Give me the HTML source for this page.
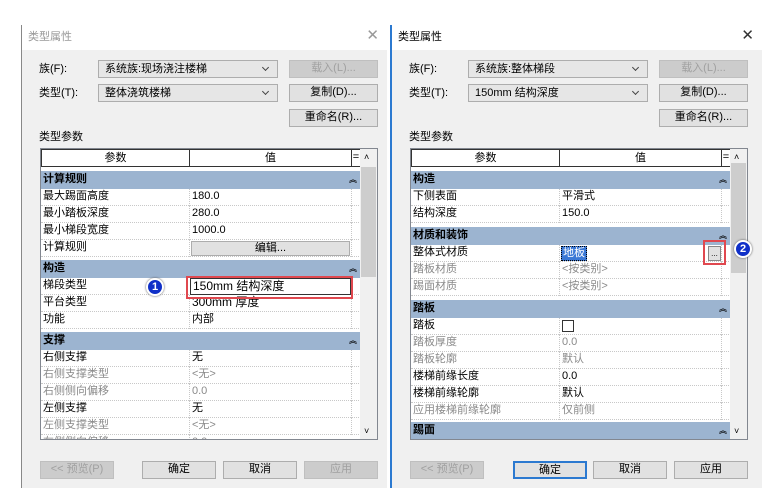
<!DOCTYPE html>
<html><head><meta charset="utf-8"><style>
*{margin:0;padding:0;box-sizing:border-box}
body{width:762px;height:501px;background:#fff;position:relative;overflow:hidden;font-family:"Liberation Sans","Noto Sans CJK SC",sans-serif;font-size:11px;color:#000;line-height:13px}
.a{position:absolute}
.dlg{position:absolute;top:25px;height:463px;background:#f0f0f0}
.tb{position:absolute;left:0;right:0;top:0;height:25px;background:#fff;font-size:11px;padding:6px 0 0 6px}
.x{position:absolute;right:8px;top:3px;font-size:15px;color:#333;line-height:16px}
.lbl{position:absolute;font-size:11px}
.combo{position:absolute;height:18px;width:180px;background:#e6e6e6;border:1px solid #adadad;padding:2px 6px;font-size:11px}
.combo:after{content:"";position:absolute;right:9px;top:4px;width:4px;height:4px;border-right:1px solid #444;border-bottom:1px solid #444;transform:rotate(45deg)}
.btn{position:absolute;height:18px;width:89px;background:#e1e1e1;border:1px solid #adadad;text-align:center;padding-top:1px;font-size:11px}
.dis{color:#a0a0a0;background:#cccccc;border-color:#bfbfbf}
.tbl{position:absolute;top:148px;width:338px;height:292px;background:#fff;border:1px solid #828790;overflow:hidden}
.hd{position:absolute;top:0;height:18px;border:1px solid #333;background:#fff;text-align:center;padding-top:2px}
.row{position:absolute;left:0;width:320px;height:17px;border-bottom:1px dotted #c8c8c8}
.sec{position:absolute;left:0;width:320px;height:18px;background:#9cb4d0;font-weight:bold;padding:2px 0 0 2px}
.sec:after{content:"︽";position:absolute;right:4px;top:2px;font-size:8px;font-weight:bold}
.n{position:absolute;left:2px;top:1px}
.v{position:absolute;top:1px}
.g{color:#8a8a8a}
.vl{position:absolute;top:0;width:1px;height:17px;border-left:1px dotted #c8c8c8}
.sb{position:absolute;top:0;right:0;width:17px;height:290px;background:#f0f0f0}
.th{position:absolute;left:1px;width:15px;background:#cdcdcd}
.badge{position:absolute;width:18px;height:18px;border-radius:50%;background:#1030c8;border:2px solid #fff;box-shadow:0 0 2px #555;color:#fff;font-weight:bold;font-size:11px;text-align:center;line-height:14px}
</style></head><body>

<div class="dlg" style="left:21px;width:366px;border-left:1px solid #888">
 <div class="tb" style="color:#999">类型属性<span class="x" style="color:#999">✕</span></div>
</div>
<div class="lbl" style="left:39px;top:63px">族(F):</div>
<div class="combo" style="left:98px;top:60px">系统族:现场浇注楼梯</div>
<div class="btn dis" style="left:289px;top:60px">载入(L)...</div>
<div class="lbl" style="left:39px;top:87px">类型(T):</div>
<div class="combo" style="left:98px;top:84px">整体浇筑楼梯</div>
<div class="btn" style="left:289px;top:84px">复制(D)...</div>
<div class="btn" style="left:289px;top:109px">重命名(R)...</div>
<div class="lbl" style="left:39px;top:131px">类型参数</div>

<div class="tbl" style="left:40px">
 <div class="hd" style="left:0;width:149px">参数</div>
 <div class="hd" style="left:148px;width:163px">值</div>
 <div class="hd" style="left:310px;width:10px;padding-top:1px">=</div>
 <div class="sec" style="top:22px">计算规则</div>
 <div class="row" style="top:40px"><span class="n">最大踢面高度</span><span class="vl" style="left:148px"></span><span class="v" style="left:151px">180.0</span><span class="vl" style="left:310px"></span></div>
 <div class="row" style="top:57px"><span class="n">最小踏板深度</span><span class="vl" style="left:148px"></span><span class="v" style="left:151px">280.0</span><span class="vl" style="left:310px"></span></div>
 <div class="row" style="top:74px"><span class="n">最小梯段宽度</span><span class="vl" style="left:148px"></span><span class="v" style="left:151px">1000.0</span><span class="vl" style="left:310px"></span></div>
 <div class="row" style="top:91px"><span class="n">计算规则</span><span class="vl" style="left:148px"></span><span class="a" style="left:150px;top:1px;width:159px;height:15px;background:#e1e1e1;border:1px solid #adadad;text-align:center">编辑...</span><span class="vl" style="left:310px"></span></div>
 <div class="sec" style="top:111px">构造</div>
 <div class="row" style="top:129px"><span class="n">梯段类型</span><span class="a" style="left:149px;top:0;width:161px;height:17px;border:1px solid #333;padding:1px 2px;font-size:12px">150mm 结构深度</span><span class="vl" style="left:310px"></span></div>
 <div class="row" style="top:146px"><span class="n">平台类型</span><span class="vl" style="left:148px"></span><span class="v" style="left:151px;font-size:12px">300mm 厚度</span><span class="vl" style="left:310px"></span></div>
 <div class="row" style="top:163px"><span class="n">功能</span><span class="vl" style="left:148px"></span><span class="v" style="left:151px">内部</span><span class="vl" style="left:310px"></span></div>
 <div class="sec" style="top:183px">支撑</div>
 <div class="row" style="top:201px"><span class="n">右侧支撑</span><span class="vl" style="left:148px"></span><span class="v" style="left:151px">无</span><span class="vl" style="left:310px"></span></div>
 <div class="row g" style="top:218px"><span class="n">右侧支撑类型</span><span class="vl" style="left:148px"></span><span class="v" style="left:151px">&lt;无&gt;</span><span class="vl" style="left:310px"></span></div>
 <div class="row g" style="top:235px"><span class="n">右侧侧向偏移</span><span class="vl" style="left:148px"></span><span class="v" style="left:151px">0.0</span><span class="vl" style="left:310px"></span></div>
 <div class="row" style="top:252px"><span class="n">左侧支撑</span><span class="vl" style="left:148px"></span><span class="v" style="left:151px">无</span><span class="vl" style="left:310px"></span></div>
 <div class="row g" style="top:269px"><span class="n">左侧支撑类型</span><span class="vl" style="left:148px"></span><span class="v" style="left:151px">&lt;无&gt;</span><span class="vl" style="left:310px"></span></div>
 <div class="row g" style="top:286px"><span class="n">左侧侧向偏移</span><span class="vl" style="left:148px"></span><span class="v" style="left:151px">0.0</span></div>
 <div class="sb"><span class="a" style="left:4px;top:2px;font-size:9px">˄</span><div class="th" style="top:18px;height:110px"></div><span class="a" style="left:4px;top:276px;font-size:9px">˅</span></div>
</div>
<div class="a" style="left:186px;top:276px;width:167px;height:23px;border:2px solid #e0484f"></div>
<div class="badge" style="left:146px;top:278px">1</div>

<div class="btn dis" style="left:40px;top:461px;width:74px">&lt;&lt; 预览(P)</div>
<div class="btn" style="left:142px;top:461px;width:74px">确定</div>
<div class="btn" style="left:223px;top:461px;width:74px">取消</div>
<div class="btn dis" style="left:304px;top:461px;width:74px">应用</div>

<div class="dlg" style="left:390px;width:372px;border-left:2px solid #2b79d0">
 <div class="tb">类型属性<span class="x">✕</span></div>
</div>
<div class="lbl" style="left:409px;top:63px">族(F):</div>
<div class="combo" style="left:468px;top:60px">系统族:整体梯段</div>
<div class="btn dis" style="left:659px;top:60px">载入(L)...</div>
<div class="lbl" style="left:409px;top:87px">类型(T):</div>
<div class="combo" style="left:468px;top:84px">150mm 结构深度</div>
<div class="btn" style="left:659px;top:84px">复制(D)...</div>
<div class="btn" style="left:659px;top:109px">重命名(R)...</div>
<div class="lbl" style="left:409px;top:131px">类型参数</div>

<div class="tbl" style="left:410px">
 <div class="hd" style="left:0;width:149px">参数</div>
 <div class="hd" style="left:148px;width:163px">值</div>
 <div class="hd" style="left:310px;width:10px;padding-top:1px">=</div>
 <div class="sec" style="top:22px">构造</div>
 <div class="row" style="top:40px"><span class="n">下侧表面</span><span class="vl" style="left:148px"></span><span class="v" style="left:151px">平滑式</span><span class="vl" style="left:310px"></span></div>
 <div class="row" style="top:57px"><span class="n">结构深度</span><span class="vl" style="left:148px"></span><span class="v" style="left:151px">150.0</span><span class="vl" style="left:310px"></span></div>
 <div class="sec" style="top:78px">材质和装饰</div>
 <div class="row" style="top:96px"><span class="n">整体式材质</span><span class="vl" style="left:148px"></span><span class="a" style="left:150px;top:1px;background:#3a78d6;color:#fff;padding:0 1px;border:1px dotted #000">地板</span><span class="a" style="left:297px;top:1px;width:13px;height:15px;background:#e1e1e1;border:1px solid #888;font-size:8px;text-align:center">...</span><span class="vl" style="left:310px"></span></div>
 <div class="row g" style="top:113px"><span class="n">踏板材质</span><span class="vl" style="left:148px"></span><span class="v" style="left:151px">&lt;按类别&gt;</span><span class="vl" style="left:310px"></span></div>
 <div class="row g" style="top:130px"><span class="n">踢面材质</span><span class="vl" style="left:148px"></span><span class="v" style="left:151px">&lt;按类别&gt;</span><span class="vl" style="left:310px"></span></div>
 <div class="sec" style="top:151px">踏板</div>
 <div class="row" style="top:169px"><span class="n">踏板</span><span class="vl" style="left:148px"></span><span class="a" style="left:151px;top:2px;width:12px;height:12px;border:1px solid #333;background:#fff"></span><span class="vl" style="left:310px"></span></div>
 <div class="row g" style="top:186px"><span class="n">踏板厚度</span><span class="vl" style="left:148px"></span><span class="v" style="left:151px">0.0</span><span class="vl" style="left:310px"></span></div>
 <div class="row g" style="top:203px"><span class="n">踏板轮廓</span><span class="vl" style="left:148px"></span><span class="v" style="left:151px">默认</span><span class="vl" style="left:310px"></span></div>
 <div class="row" style="top:220px"><span class="n">楼梯前缘长度</span><span class="vl" style="left:148px"></span><span class="v" style="left:151px">0.0</span><span class="vl" style="left:310px"></span></div>
 <div class="row" style="top:237px"><span class="n">楼梯前缘轮廓</span><span class="vl" style="left:148px"></span><span class="v" style="left:151px">默认</span><span class="vl" style="left:310px"></span></div>
 <div class="row g" style="top:254px"><span class="n">应用楼梯前缘轮廓</span><span class="vl" style="left:148px"></span><span class="v" style="left:151px">仅前侧</span><span class="vl" style="left:310px"></span></div>
 <div class="sec" style="top:273px">踢面</div>
 <div class="sb"><span class="a" style="left:4px;top:2px;font-size:9px">˄</span><div class="th" style="top:14px;height:110px"></div><span class="a" style="left:4px;top:276px;font-size:9px">˅</span></div>
</div>
<div class="a" style="left:703px;top:240px;width:23px;height:25px;border:2px solid #e0484f"></div>
<div class="badge" style="left:734px;top:240px">2</div>

<div class="btn dis" style="left:410px;top:461px;width:74px">&lt;&lt; 预览(P)</div>
<div class="btn" style="left:513px;top:461px;width:74px;border:2px solid #2b79d0">确定</div>
<div class="btn" style="left:593px;top:461px;width:74px">取消</div>
<div class="btn" style="left:674px;top:461px;width:74px">应用</div>
</body></html>
